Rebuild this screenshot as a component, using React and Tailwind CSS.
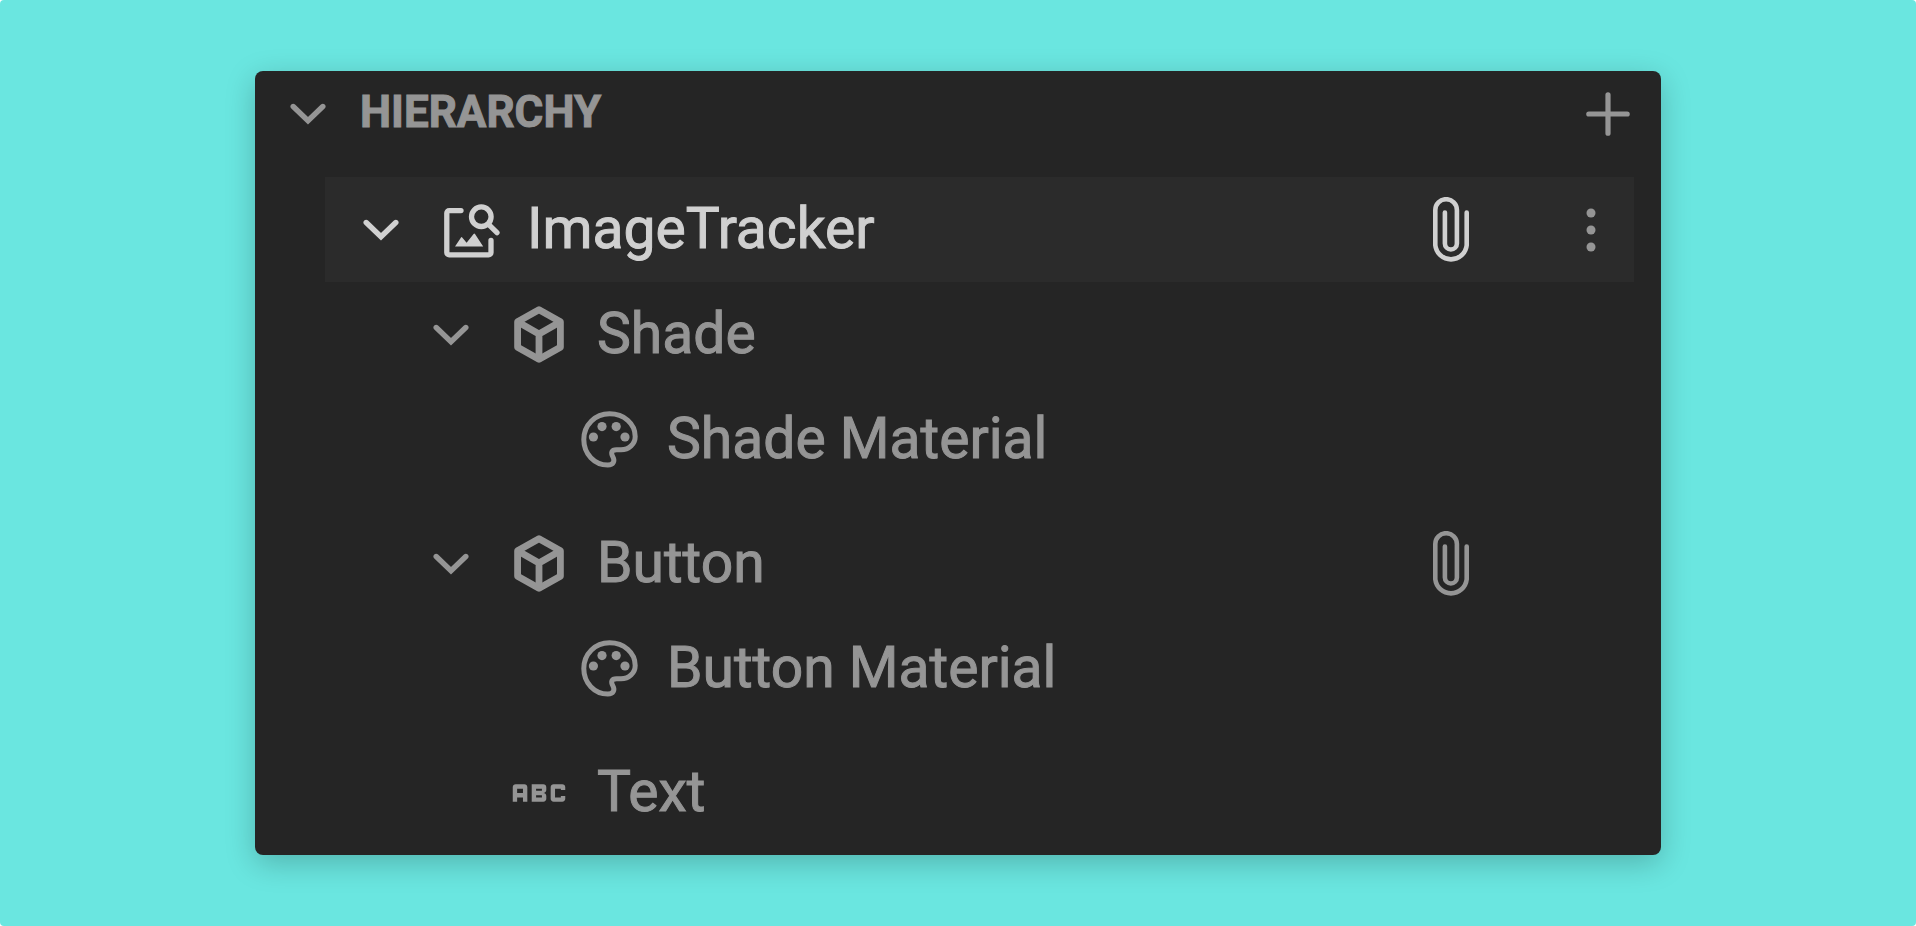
import { useState } from "react";
import { MdAbc } from "react-icons/md";
import clsx from "clsx";

const tree = [
  {
    name: "ImageTracker",
    type: "tracker",
    hasScript: true,
    children: [
      {
        name: "Shade",
        type: "mesh",
        children: [{ name: "Shade Material", type: "material" }],
      },
      {
        name: "Button",
        type: "mesh",
        hasScript: true,
        children: [{ name: "Button Material", type: "material" }],
      },
      { name: "Text", type: "text" },
    ],
  },
];

function ChevronIcon({ open = true }) {
  return (
    <svg
      viewBox="0 0 36 22"
      className={clsx("w-9 h-[22px]", !open && "-rotate-90")}
      fill="none"
      stroke="currentColor"
      strokeWidth="5.4"
      strokeLinecap="round"
    >
      <path d="M3.2 3.5 18 17.8 32.8 3.5" />
    </svg>
  );
}

function PlusIcon() {
  return (
    <svg viewBox="0 0 46 46" className="size-[46px]" stroke="currentColor" strokeWidth="5.2" strokeLinecap="round">
      <path d="M23 3.8v38.4M3.800 23h38.400" />
    </svg>
  );
}

function TrackerIcon() {
  return (
    <svg
      viewBox="-3 -1 56 54"
      className="w-14 h-[54px] overflow-visible"
      fill="none"
      stroke="currentColor"
      strokeWidth="5.3"
      strokeLinecap="round"
      strokeLinejoin="round"
    >
      <path d="M17 6.6H5.2a2.4 2.4 0 0 0-2.4 2.4v39.4a2.4 2.4 0 0 0 2.4 2.4h39.4a2.4 2.4 0 0 0 2.4-2.4V36.4" />
      <circle cx="37.3" cy="12.7" r="9.8" />
      <path d="M44.8 20.6 53 28.6" />
      <path
        d="M11 42.6 17 33.4Q17.6 32.6 18.2 33.4L22.6 38.8 29.6 30Q30.3 29.2 31 30L39.2 42.6Z"
        fill="currentColor"
        stroke="none"
      />
    </svg>
  );
}

function MeshIcon() {
  return (
    <svg
      viewBox="0 0 50 57"
      className="w-[50px] h-[57px]"
      fill="none"
      stroke="currentColor"
      strokeWidth="6.8"
      strokeLinejoin="round"
    >
      <path d="M25 3.7 46.4 15.8V41.2L25 53.3 3.6 41.2V15.8Z" />
      <path d="M3.6 15.8 25 28 46.4 15.8M25 28V53.3" />
    </svg>
  );
}

function MaterialIcon() {
  return (
    <svg
      viewBox="0 0 56 57"
      className="w-14 h-[57px] overflow-visible"
      fill="none"
      stroke="currentColor"
      strokeWidth="5"
      strokeLinejoin="round"
    >
      <path d="M28.5 2.8C14 2.8 2.8 14 2.8 28.500S13.500 54 26.800 54C32.500 54 34 50 32 46.200 29.500 41.500 30.500 38.800 35.500 38.800H40C48 38.800 54.200 32.800 54.200 25.500 54.200 12.500 43 2.800 28.500 2.800Z" />
      <g fill="currentColor" stroke="none">
        <circle cx="12.400" cy="26" r="4.600" />
        <circle cx="21" cy="15.600" r="4.600" />
        <circle cx="35.200" cy="15.600" r="4.600" />
        <circle cx="44" cy="26" r="4.600" />
      </g>
    </svg>
  );
}

function ClipIcon() {
  return (
    <svg
      viewBox="0 0 37 66"
      className="w-[37px] h-[66px]"
      fill="none"
      stroke="currentColor"
      strokeWidth="4.6"
      strokeLinecap="round"
    >
      <path d="M33.700 15.500V48.300a15.800 15.800 0 0 1-31.400 0V13a10.800 10.800 0 0 1 21.600 0V46.500a6 6 0 0 1-12 0V15.500" />
    </svg>
  );
}

function DotsIcon() {
  return (
    <svg viewBox="0 0 10 44" className="w-[10px] h-11" fill="currentColor">
      <circle cx="5" cy="5" r="4.500" />
      <circle cx="5" cy="22" r="4.500" />
      <circle cx="5" cy="39" r="4.500" />
    </svg>
  );
}

function NodeIcon({ type }) {
  if (type === "tracker") return <TrackerIcon />;
  if (type === "mesh") return <MeshIcon />;
  if (type === "material") return <MaterialIcon />;
  return <MdAbc className="size-[70px] shrink-0" />;
}

function TreeNode({ node, selected, onSelect }) {
  const [open, setOpen] = useState(true);
  const isSelected = selected === node.name;

  return (
    <li>
      <div
        className={clsx(
          "flex h-[105px] items-center px-[38px]",
          isSelected ? "bg-[#2b2b2b] text-[#d0d0d0]" : "text-[#959595]",
          node.type === "material" && "mb-[19px]"
        )}
        onClick={() => onSelect(node.name)}
      >
        {node.children ? (
          <button aria-label={`Toggle ${node.name}`} className="w-9 shrink-0" onClick={() => setOpen(!open)}>
            <ChevronIcon open={open} />
          </button>
        ) : (
          <span className="w-9 shrink-0" />
        )}
        <span className="ml-[42px] flex w-14 shrink-0 justify-center">
          <NodeIcon type={node.type} />
        </span>
        <span className="ml-[30px] flex-1 whitespace-nowrap pb-[2px] text-[57px] leading-[68px] [-webkit-text-stroke:1px]">
          {node.name}
        </span>
        {node.hasScript && (
          <button aria-label={`${node.name} scripts`} className="mr-[116px]">
            <ClipIcon />
          </button>
        )}
        <span className="w-[10px] shrink-0">
          {isSelected && (
            <button aria-label="More options" className="block text-[#959595]">
              <DotsIcon />
            </button>
          )}
        </span>
      </div>
      {node.children && open && (
        <ul className="pl-[70px]">
          {node.children.map((child) => (
            <TreeNode key={child.name} node={child} selected={selected} onSelect={onSelect} />
          ))}
        </ul>
      )}
    </li>
  );
}

function App() {
  const [selected, setSelected] = useState("ImageTracker");
  const [open, setOpen] = useState(true);

  return (
    <div className="bg-white">
      <main className="min-h-screen rounded bg-[#6ae6e0] py-[71px] font-[Roboto,sans-serif]">
        <section className="mx-auto w-full max-w-[1406px] rounded-lg bg-[#252525] pb-[10px] shadow-[0_8px_30px_rgba(0,0,0,0.22)]">
          <header className="mb-5 flex h-[86px] items-center pl-[35px] pr-[30px] text-[#959595]">
            <button aria-label="Toggle hierarchy" onClick={() => setOpen(!open)}>
              <ChevronIcon open={open} />
            </button>
            <h1 className="ml-[34px] flex-1 pb-1 text-[44px] leading-[52px] font-bold [-webkit-text-stroke:1px]">
              HIERARCHY
            </h1>
            <button aria-label="Add object">
              <PlusIcon />
            </button>
          </header>
          {open && (
            <ul className="ml-[70px] mr-[27px]">
              {tree.map((node) => (
                <TreeNode key={node.name} node={node} selected={selected} onSelect={setSelected} />
              ))}
            </ul>
          )}
        </section>
      </main>
    </div>
  );
}

export default App;
